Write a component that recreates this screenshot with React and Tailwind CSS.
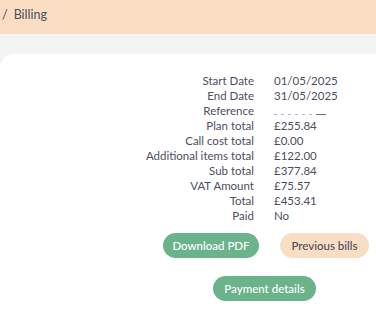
export default function App() {
  const rows = [
    ["Start Date", "01/05/2025"],
    ["End Date", "31/05/2025"],
    ["Reference", null],
    ["Plan total", "£255.84"],
    ["Call cost total", "£0.00"],
    ["Additional items total", "£122.00"],
    ["Sub total", "£377.84"],
    ["VAT Amount", "£75.57"],
    ["Total", "£453.41"],
    ["Paid", "No"],
  ];
  return (
    <div className="w-[376px] h-[315px] overflow-hidden bg-[#f4f4f4] text-[#4e4d60]" style={{ fontFamily: 'Lato, sans-serif' }}>
      <div className="h-[34px] bg-[#f9dec3] flex items-center pl-[2px] text-[12.5px] pb-[4px]">
        <span>/</span>
        <span className="ml-[6px]">Billing</span>
      </div>
      <div className="pt-[20px]">
        <div className="bg-white rounded-tl-[14px] h-[270px] pt-[19px]">
          <div className="grid grid-cols-[254px_1fr] gap-x-[20px] text-[11.5px] leading-[15px]">
            {rows.map(([k, v]) => [
              <div key={k} className="text-right">{k}</div>,
              <div key={k + "v"} className="relative h-[15px]">
                {v !== null ? (
                  v
                ) : (
                  <div className="absolute left-0 top-[11px] flex items-center gap-[4px]">
                    <span className="w-[3px] h-[1px] bg-[#b9b8c2]"></span>
                    <span className="w-[3px] h-[1px] bg-[#b9b8c2]"></span>
                    <span className="w-[3px] h-[1px] bg-[#b9b8c2]"></span>
                    <span className="w-[3px] h-[1px] bg-[#b9b8c2]"></span>
                    <span className="w-[3px] h-[1px] bg-[#b9b8c2]"></span>
                    <span className="w-[3px] h-[1px] bg-[#b9b8c2]"></span>
                    <span className="w-[10px] h-[1px] bg-[#6e6d7e]"></span>
                  </div>
                )}
              </div>,
            ])}
          </div>
          <div className="ml-[163px] w-[206px] mt-[10px] flex flex-col items-center gap-[18px]">
            <div className="flex w-full justify-between">
              <button className="w-[96px] h-[25px] rounded-full bg-[#6bb38a] text-white text-[11.5px] font-medium">Download PDF</button>
              <button className="w-[89px] h-[25px] rounded-full bg-[#f9dec3] text-[#4e4d60] text-[11.5px] font-medium">Previous bills</button>
            </div>
            <button className="w-[103px] h-[25px] rounded-full bg-[#6bb38a] text-white text-[11.5px] font-medium -ml-[3px]">Payment details</button>
          </div>
        </div>
      </div>
    </div>
  );
}
